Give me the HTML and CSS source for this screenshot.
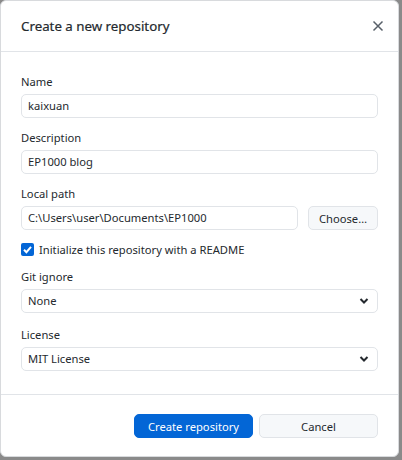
FILE: index.html
```html
<!DOCTYPE html>
<html>
<head>
<meta charset="utf-8">
<link rel="stylesheet" href="styles.css">
</head>
<body>
<div class="dialog">
  <div class="header">
    <span class="title">Create a new repository</span>
    <svg class="close" width="12" height="12" viewBox="0 0 12 12"><path d="M1.5 1.5 L10.5 10.5 M10.5 1.5 L1.5 10.5" stroke="#586069" stroke-width="1.5" fill="none"/></svg>
  </div>
  <div class="body">
    <div class="field">
      <label class="label">Name</label>
      <div class="input">kaixuan</div>
    </div>
    <div class="field">
      <label class="label">Description</label>
      <div class="input">EP1000 blog</div>
    </div>
    <div class="field">
      <label class="label">Local path</label>
      <div class="row">
        <div class="input grow">C:\Users\user\Documents\EP1000</div>
        <div class="btn secondary choose">Choose…</div>
      </div>
    </div>
    <div class="check-row">
      <span class="checkbox"><svg width="13" height="13" viewBox="0 0 13 13"><path d="M3 6.8 L5.4 9.2 L10 3.9" stroke="#fff" stroke-width="2" fill="none"/></svg></span>
      <span class="check-label">Initialize this repository with a README</span>
    </div>
    <div class="field">
      <label class="label">Git ignore</label>
      <div class="input select">None<svg class="chev" width="10" height="8" viewBox="0 0 10 8"><path d="M1.5 2 L5 5.5 L8.5 2" stroke="#24292e" stroke-width="2" fill="none"/></svg></div>
    </div>
    <div class="field license">
      <label class="label">License</label>
      <div class="input select">MIT License<svg class="chev" width="10" height="8" viewBox="0 0 10 8"><path d="M1.5 2 L5 5.5 L8.5 2" stroke="#24292e" stroke-width="2" fill="none"/></svg></div>
    </div>
  </div>
  <div class="footer">
    <div class="btn primary">Create repository</div>
    <div class="btn secondary">Cancel</div>
  </div>
</div>
</body>
</html>
```
FILE: styles.css
```css
html, body {
  margin: 0;
  padding: 0;
  background: #8a8a8a;
  width: 402px;
  height: 460px;
  overflow: hidden;
}
body {
  font-family: "Noto Sans", "Open Sans", sans-serif;
  font-size: 11.2px;
  color: #24292e;
}
.dialog {
  box-sizing: border-box;
  width: 399px;
  height: 457px;
  background: #fff;
  border: 1px solid #d8dadd;
  border-radius: 6px;
  display: flex;
  flex-direction: column;
}
.header {
  height: 50px;
  border-bottom: 1px solid #e1e4e8;
  display: flex;
  align-items: center;
  justify-content: space-between;
  padding: 0 14px 0 20px;
}
.title {
  font-size: 13.3px;
  font-weight: 400;
  color: #24292e;
  -webkit-text-stroke: 0.2px #24292e;
}
.close {
  display: block;
}
.body {
  padding: 22px 20px 23px 20px;
  display: flex;
  flex-direction: column;
  gap: 12px;
  border-bottom: 1px solid #e1e4e8;
}
.field {
  display: flex;
  flex-direction: column;
  gap: 5px;
}
.license {
  margin-top: 2px;
}
.label {
  line-height: 15px;
  color: #24292e;
}
.input {
  box-sizing: border-box;
  height: 24px;
  border: 1px solid #e1e4e8;
  border-radius: 5px;
  padding: 0 6px;
  display: flex;
  align-items: center;
  line-height: 22px;
}
.row {
  display: flex;
  gap: 10px;
}
.grow {
  flex: 1;
}
.select {
  justify-content: space-between;
  padding-right: 8px;
}
.chev { display: block; }
.btn {
  box-sizing: border-box;
  height: 24px;
  border-radius: 5px;
  display: flex;
  align-items: center;
  justify-content: center;
}
.secondary {
  background: #f6f8fa;
  border: 1px solid #e1e4e8;
}
.choose {
  width: 70px;
}
.primary {
  background: #0366d6;
  color: #fff;
  border: 1px solid #0366d6;
}
.check-row {
  display: flex;
  align-items: center;
  gap: 5px;
}
.checkbox {
  width: 13px;
  height: 13px;
  border-radius: 2px;
  background: #0366d6;
  display: block;
}
.checkbox svg { display: block; }
.footer {
  flex: 1;
  display: flex;
  justify-content: flex-end;
  align-items: flex-start;
  padding: 19px 20px 0 0;
  gap: 6px;
}
.footer .btn {
  width: 119px;
}
```
